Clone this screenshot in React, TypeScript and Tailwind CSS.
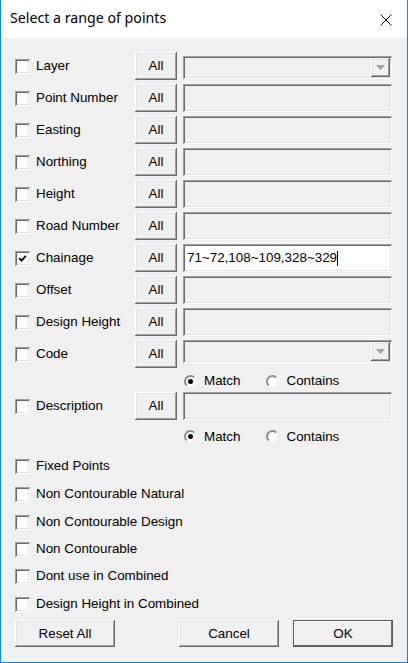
import React from "react";

const sunken =
  "shadow-[inset_1px_1px_0_#a0a0a0,inset_-1px_-1px_0_#ffffff,inset_2px_2px_0_#696969,inset_-2px_-2px_0_#e3e3e3]";
const raised =
  "shadow-[inset_-1px_-1px_0_#696969,inset_1px_1px_0_#ffffff,inset_-2px_-2px_0_#a0a0a0,inset_2px_2px_0_#e3e3e3]";

function Check({ checked }: { checked?: boolean }) {
  return (
    <div
      className={`w-[15px] h-[15px] bg-white shrink-0 flex items-center justify-center ${sunken}`}
    >
      {checked && (
        <svg width="9" height="9" viewBox="0 0 9 9">
          <path d="M1.2 4.2 L3.5 6.6 L7.9 1.8" stroke="#000" strokeWidth="1.9" fill="none" />
        </svg>
      )}
    </div>
  );
}

function AllBtn() {
  return (
    <div
      className={`w-[42px] h-[28px] shrink-0 flex items-center justify-center bg-[#f0f0f0] ${raised}`}
    >
      All
    </div>
  );
}

function TextBox({ value, active }: { value?: string; active?: boolean }) {
  return (
    <div
      className={`ml-[6px] w-[209px] h-[28px] flex items-center pl-[4px] ${
        active ? "bg-white" : "bg-[#f0f0f0]"
      } ${sunken}`}
    >
      {value && (
        <>
          <span>{value}</span>
          <span className="w-px h-[15px] bg-black" />
        </>
      )}
    </div>
  );
}

function Combo({ offset }: { offset?: boolean }) {
  return (
    <div
      className={`ml-[6px] w-[209px] h-[23px] self-start flex justify-end items-stretch p-[2px] bg-[#f0f0f0] ${sunken} ${
        offset ? "mt-[4px]" : "mt-0"
      }`}
    >
      <div className={`w-[19px] flex items-center justify-center bg-[#f0f0f0] ${raised}`}>
        <svg width="9" height="5" viewBox="0 0 9 5">
          <path d="M0 0 H9 L4.5 5 Z" fill="#a0a0a0" />
        </svg>
      </div>
    </div>
  );
}

function Radio({ checked }: { checked?: boolean }) {
  return (
    <div className="w-[13px] h-[13px] shrink-0 rounded-full border-2 border-t-[#8a8a8a] border-l-[#8a8a8a] border-r-[#f4f4f4] border-b-[#f4f4f4] bg-white flex items-center justify-center">
      {checked && <div className="w-[5px] h-[5px] rounded-full bg-black" />}
    </div>
  );
}

function FieldRow({
  label,
  checked,
  children,
}: {
  label: string;
  checked?: boolean;
  children: React.ReactNode;
}) {
  return (
    <div className="flex items-center h-[28px] mb-[4px]">
      <Check checked={checked} />
      <div className="ml-[6px] w-[99px]">{label}</div>
      <AllBtn />
      {children}
    </div>
  );
}

function RadioRow({ h }: { h: string }) {
  return (
    <div className={`flex items-center ${h}`}>
      <div className="ml-[169px] flex items-center">
        <Radio checked />
        <span className="ml-[7px]">Match</span>
      </div>
      <div className="ml-[26px] flex items-center">
        <Radio />
        <span className="ml-[7px]">Contains</span>
      </div>
    </div>
  );
}

function CheckRow({ label, h }: { label: string; h: string }) {
  return (
    <div className={`flex items-center ${h}`}>
      <Check />
      <span className="ml-[6px]">{label}</span>
    </div>
  );
}

function DlgButton({ label, def }: { label: string; def?: boolean }) {
  return (
    <div
      className={`w-[100px] h-[27px] flex items-center justify-center bg-[#f0f0f0] ${
        def
          ? "border border-[#5a5a5a] shadow-[inset_-1px_-1px_0_#696969,inset_1px_1px_0_#ffffff]"
          : raised
      }`}
    >
      {label}
    </div>
  );
}

export default function App() {
  return (
    <div
      className="w-[408px] h-[663px] flex flex-col bg-[#f0f0f0] border-x border-b border-[#1883d7] text-black text-[13.4px] leading-none"
      style={{ fontFamily: '"Liberation Sans", Arial, sans-serif' }}
    >
      <div className="h-[38px] shrink-0 bg-white flex items-center justify-between pl-[9px] pr-[15px]">
        <span
          className="text-[14.2px] leading-none pb-[1px]"
          style={{ fontFamily: '"Noto Sans", "Open Sans", sans-serif' }}
        >
          Select a range of points
        </span>
        <svg width="12" height="12" viewBox="0 0 12 12" className="mt-[2px]">
          <path d="M0.5 0.5 L11.5 11.5 M11.5 0.5 L0.5 11.5" stroke="#000" strokeWidth="1" />
        </svg>
      </div>
      <div className="flex flex-col pl-[14px] pt-[14px]">
        <FieldRow label="Layer">
          <Combo offset />
        </FieldRow>
        <FieldRow label="Point Number">
          <TextBox />
        </FieldRow>
        <FieldRow label="Easting">
          <TextBox />
        </FieldRow>
        <FieldRow label="Northing">
          <TextBox />
        </FieldRow>
        <FieldRow label="Height">
          <TextBox />
        </FieldRow>
        <FieldRow label="Road Number">
          <TextBox />
        </FieldRow>
        <FieldRow label="Chainage" checked>
          <TextBox value="71~72,108~109,328~329" active />
        </FieldRow>
        <FieldRow label="Offset">
          <TextBox />
        </FieldRow>
        <FieldRow label="Design Height">
          <TextBox />
        </FieldRow>
        <div className="flex items-center h-[28px]">
          <Check />
          <div className="ml-[6px] w-[99px]">Code</div>
          <AllBtn />
          <Combo />
        </div>
        <div className="pt-[2px]">
          <RadioRow h="h-[22px]" />
        </div>
        <div className="flex items-center h-[28px]">
          <Check />
          <div className="ml-[6px] w-[99px]">Description</div>
          <AllBtn />
          <TextBox />
        </div>
        <div className="pt-[1px]">
          <RadioRow h="h-[31px]" />
        </div>
        <CheckRow label="Fixed Points" h="h-[28px]" />
        <CheckRow label="Non Contourable Natural" h="h-[28px]" />
        <CheckRow label="Non Contourable Design" h="h-[28px]" />
        <CheckRow label="Non Contourable" h="h-[26px]" />
        <CheckRow label="Dont use in Combined" h="h-[28px]" />
        <CheckRow label="Design Height in Combined" h="h-[28px]" />
        <div className="flex mt-[2px]">
          <DlgButton label="Reset All" />
          <div className="ml-[64px]">
            <DlgButton label="Cancel" />
          </div>
          <div className="ml-[14px]">
            <DlgButton label="OK" def />
          </div>
        </div>
      </div>
    </div>
  );
}
